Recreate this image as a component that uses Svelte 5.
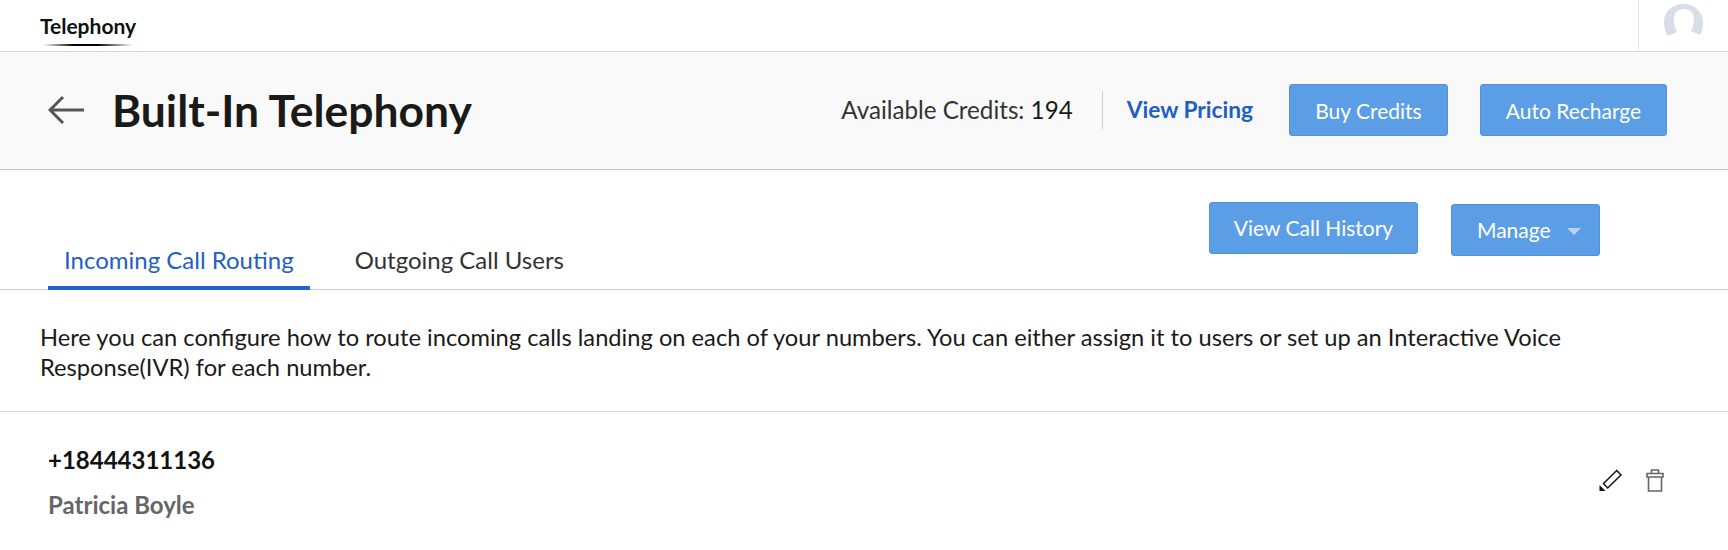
<script>
  const numbers = [{ phone: '+18444311136', owner: 'Patricia Boyle' }];
</script>

<div class="page">
  <header class="topbar">
    <div class="brand">
      <span class="brand-name">Telephony</span>
      <span class="brand-line"></span>
    </div>
    <div class="avatar">
      <svg width="39" height="33" viewBox="0 0 39 33" aria-hidden="true">
        <path d="M4 32 C1 28 0 23 0 18 C0 8 8 0 19.500 0 C31 0 39 8 39 18 C39 23 38 28 36 31 L27 27 C29 24 30 19 30 15 C30 9 26 5 19.500 5 C13 5 10 9 10 15 C10 20 11 25 13 28 Z" fill="#d8dde8"/>
      </svg>
    </div>
  </header>

  <section class="titlebar">
    <div class="title-left">
      <svg class="back" width="36" height="30" viewBox="0 0 36 30" aria-hidden="true">
        <path d="M36 15 H3 M15 2 L2 15 L15 28" fill="none" stroke="#555" stroke-width="3"/>
      </svg>
      <h1>Built-In Telephony</h1>
    </div>
    <div class="title-right">
      <span class="credits">Available Credits: <span class="count">194</span></span>
      <span class="divider"></span>
      <a class="pricing" href="#pricing">View Pricing</a>
      <button class="btn buy">Buy Credits</button>
      <button class="btn recharge">Auto Recharge</button>
    </div>
  </section>

  <section class="tabsbar">
    <nav class="tabs">
      <a class="tab active" href="#in">Incoming Call Routing</a>
      <a class="tab" href="#out">Outgoing Call Users</a>
    </nav>
    <div class="tab-actions">
      <button class="btn history">View Call History</button>
      <button class="btn manage">Manage <span class="caret"></span></button>
    </div>
  </section>

  <p class="intro">Here you can configure how to route incoming calls landing on each of your numbers. You can either assign it to users or set up an Interactive Voice Response(IVR) for each number.</p>

  {#each numbers as n}
    <section class="row">
      <div>
        <div class="phone">{n.phone}</div>
        <div class="owner">{n.owner}</div>
      </div>
      <div class="row-icons">
        <svg width="23" height="23" viewBox="0 0 23 23" aria-hidden="true">
          <path d="M4.500 14.500 L17.700 1.500 L22 6 L8.700 19 Z" fill="none" stroke="#111" stroke-width="1.500"/>
          <path d="M0.500 22 L0.500 16 L6.500 22 Z" fill="#111"/>
        </svg>
        <svg width="18" height="23" viewBox="0 0 18 23" aria-hidden="true">
          <path d="M2.500 8 V22 H15.500 V8 M1 4.500 H17 V8 H1 Z M5.500 4.500 V1 H12.500 V4.500" fill="none" stroke="#666" stroke-width="1.600"/>
        </svg>
      </div>
    </section>
  {/each}
</div>

<style>
  :global(body) {
    margin: 0;
    background: #fff;
    font-family: Lato, "Liberation Sans", sans-serif;
    overflow: hidden;
  }
  .page { width: 1728px; color: #1a1a1a; }
  .topbar {
    height: 51px;
    display: flex;
    justify-content: space-between;
    border-bottom: 1px solid #d6d6d6;
  }
  .brand {
    margin-left: 40px;
    width: 96px;
    display: flex;
    flex-direction: column;
    align-items: center;
  }
  .brand-name { font-size: 21px; font-weight: 700; line-height: 24px; margin-top: 14px; color: #111; white-space: nowrap; }
  .brand-line {
    width: 90px;
    height: 2px;
    margin-top: 6px;
    background: linear-gradient(90deg, transparent, #000 35%, #000 60%, transparent);
  }
  .avatar {
    width: 90px;
    border-left: 1px solid #e4e4e4;
    display: flex;
    justify-content: center;
    padding-top: 4px;
    box-sizing: border-box;
  }
  .titlebar {
    height: 118px;
    box-sizing: border-box;
    background: #f9f9f9;
    border-bottom: 1px solid #c4c4c4;
    display: flex;
    justify-content: space-between;
    align-items: center;
    padding: 0 61px 2px 48px;
  }
  .title-left { display: flex; align-items: center; gap: 28px; }
  h1 { margin: 0; font-size: 44.4px; font-weight: 700; color: #1a1a1a; line-height: 1.2; }
  .title-right { display: flex; align-items: center; }
  .credits { font-size: 24.2px; color: #333; }
  .count { color: #1a1a1a; }
  .divider { width: 1px; height: 38px; background: #d0d0d0; margin: 0 24px 0 29px; }
  .pricing { font-size: 22.7px; font-weight: 700; color: #1f5fc4; text-decoration: none; margin-right: 36px; }
  .btn {
    font-family: inherit;
    font-size: 21px;
    color: #fff;
    background: #5c9ee6;
    border: 1px solid #4f93e0;
    border-radius: 3px;
    height: 52px;
    padding: 0;
    box-sizing: border-box;
  }
  .buy { width: 159px; margin-right: 32px; padding-top: 2px; }
  .recharge { width: 187px; padding-top: 2px; }
  .tabsbar {
    height: 120px;
    box-sizing: border-box;
    border-bottom: 1px solid #cfcfcf;
    display: flex;
    justify-content: space-between;
    padding: 0 128px 0 48px;
  }
  .tabs { display: flex; align-items: flex-end; gap: 29px; margin-bottom: -1px; }
  .tab { font-size: 24px; color: #333; text-decoration: none; padding: 0 16px; height: 59px; box-sizing: border-box; line-height: 57px; }
  .tab.active { color: #1f5fc4; border-bottom: 4px solid #1f66d1; }
  .tab-actions { display: flex; gap: 33px; align-items: flex-start; padding-top: 32px; }
  .history { width: 209px; padding-bottom: 2px; }
  .manage { width: 149px; margin-top: 2px; padding: 0 0 2px 7px; }
  .caret {
    display: inline-block;
    width: 0; height: 0;
    margin-left: 11px;
    vertical-align: 3px;
    border-left: 7px solid transparent;
    border-right: 7px solid transparent;
    border-top: 7px solid #b8d3f2;
  }
  .intro {
    margin: 0;
    padding: 33px 128px 29px 40px;
    font-size: 23.7px;
    line-height: 29.5px;
    color: #1a1a1a;
    border-bottom: 1px solid #dcdcdc;
  }
  .row { display: flex; justify-content: space-between; padding: 34px 64px 0 48px; }
  .phone { font-size: 24px; font-weight: 700; color: #111; line-height: 28px; }
  .owner { font-size: 24px; font-weight: 700; color: #666; line-height: 28px; margin-top: 17px; }
  .row-icons { display: flex; gap: 24px; align-items: flex-start; padding-top: 23px; }
</style>
